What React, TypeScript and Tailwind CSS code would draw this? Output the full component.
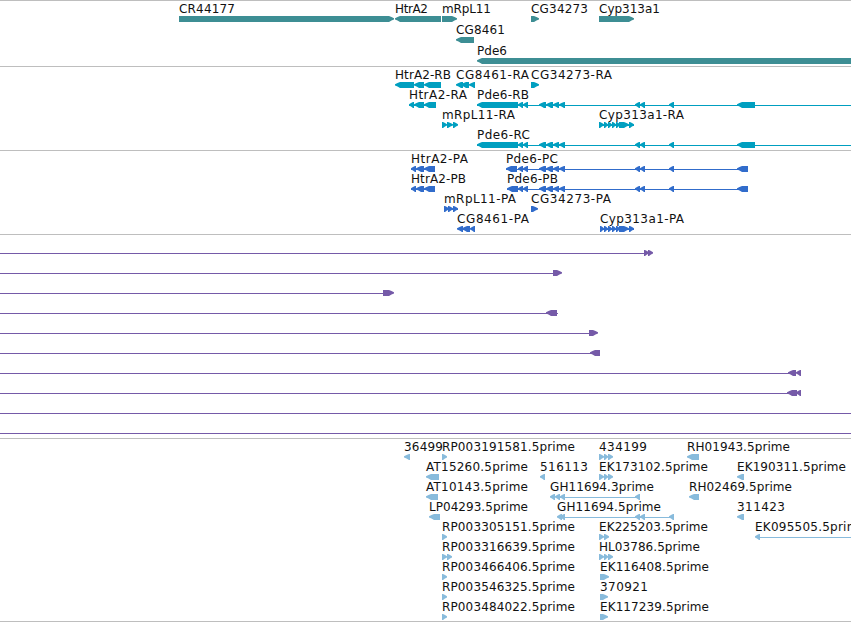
type Dir = 'l' | 'r'

type Feature = {
  row: number
  dir: Dir
  // exon blocks as [start, end]
  blocks: number[][]
  // intron line drawn behind the blocks
  line?: number[]
  // [text, start, end]
  label?: [string, number, number]
}

type TrackProps = {
  name: string
  color: string
  height: number
  pitch: number
  top: number
  features: Feature[]
}

const WIDTH = 851

const pde6Tail = [[518, 523], [523, 528], [539, 546], [546, 553], [553, 559], [559, 565], [635, 640], [640, 645], [669, 674]]
const cypExons = [[604, 608], [608, 612], [612, 616], [616, 620], [619, 629], [629, 634]]

const genes: Feature[] = [
  { row: 0, dir: 'r', blocks: [[179, 394]], label: ['CR44177', 179, 235] },
  { row: 0, dir: 'l', blocks: [[395, 441]], label: ['HtrA2', 395, 428] },
  { row: 0, dir: 'r', blocks: [[442, 457]], label: ['mRpL11', 442, 491] },
  { row: 0, dir: 'r', blocks: [[531, 539]], label: ['CG34273', 531, 588] },
  { row: 0, dir: 'r', blocks: [[599, 634]], label: ['Cyp313a1', 599, 660] },
  { row: 1, dir: 'l', blocks: [[456, 474]], label: ['CG8461', 456, 505] },
  { row: 2, dir: 'l', blocks: [[477, 860]], label: ['Pde6', 477, 507] },
]

const transcripts: Feature[] = [
  { row: 0, dir: 'l', blocks: [[395, 414], [414, 424], [424, 441]], label: ['HtrA2-RB', 395, 451] },
  { row: 0, dir: 'l', blocks: [[456, 463], [461, 469], [469, 475]], label: ['CG8461-RA', 456, 529] },
  { row: 0, dir: 'r', blocks: [[531, 539]], label: ['CG34273-RA', 531, 612] },
  { row: 1, dir: 'l', blocks: [[409, 414], [414, 424], [424, 436]], line: [409, 436], label: ['HtrA2-RA', 409, 467] },
  { row: 1, dir: 'l', blocks: [[477, 518], ...pde6Tail, [737, 755]], line: [477, 851], label: ['Pde6-RB', 477, 529] },
  { row: 2, dir: 'r', blocks: [[442, 447], [447, 453], [453, 458]], label: ['mRpL11-RA', 442, 515] },
  { row: 2, dir: 'r', blocks: [[599, 604], ...cypExons], line: [599, 634], label: ['Cyp313a1-RA', 599, 684] },
  { row: 3, dir: 'l', blocks: [[477, 518], ...pde6Tail, [737, 755]], line: [477, 851], label: ['Pde6-RC', 477, 530] },
]

const proteins: Feature[] = [
  { row: 0, dir: 'l', blocks: [[411, 416], [416, 424], [424, 435]], line: [411, 435], label: ['HtrA2-PA', 411, 468] },
  { row: 0, dir: 'l', blocks: [[506, 517], ...pde6Tail, [737, 748]], line: [506, 748], label: ['Pde6-PC', 506, 558] },
  { row: 1, dir: 'l', blocks: [[411, 416], [416, 424], [424, 435]], line: [411, 435], label: ['HtrA2-PB', 411, 466] },
  { row: 1, dir: 'l', blocks: [[507, 518], ...pde6Tail, [737, 748]], line: [507, 748], label: ['Pde6-PB', 507, 558] },
  { row: 2, dir: 'r', blocks: [[444, 449], [448, 453], [453, 458]], line: [444, 458], label: ['mRpL11-PA', 444, 516] },
  { row: 2, dir: 'r', blocks: [[531, 538]], label: ['CG34273-PA', 531, 611] },
  { row: 3, dir: 'l', blocks: [[457, 463], [462, 470], [470, 475]], label: ['CG8461-PA', 457, 529] },
  { row: 3, dir: 'r', blocks: [[600, 604], ...cypExons], line: [600, 634], label: ['Cyp313a1-PA', 600, 684] },
]

const alignments: Feature[] = [
  { row: 0, dir: 'r', blocks: [[644, 649], [648, 653]], line: [0, 648] },
  { row: 1, dir: 'r', blocks: [[553, 562]], line: [0, 554] },
  { row: 2, dir: 'r', blocks: [[383, 394]], line: [0, 384] },
  { row: 3, dir: 'l', blocks: [[546, 557]], line: [0, 558] },
  { row: 4, dir: 'r', blocks: [[589, 598]], line: [0, 590] },
  { row: 5, dir: 'l', blocks: [[590, 600]], line: [0, 598] },
  { row: 6, dir: 'l', blocks: [[788, 796], [796, 801]], line: [0, 796] },
  { row: 7, dir: 'l', blocks: [[787, 797], [796, 801]], line: [0, 796] },
  { row: 8, dir: 'l', blocks: [], line: [0, 851] },
  { row: 9, dir: 'l', blocks: [], line: [0, 851] },
]

const ests: Feature[] = [
  { row: 0, dir: 'l', blocks: [[404, 410]], label: ['36499', 404, 443] },
  { row: 0, dir: 'r', blocks: [[442, 447]], label: ['RP003191581.5prime', 442, 575] },
  { row: 0, dir: 'r', blocks: [[599, 604], [604, 608], [608, 613]], label: ['434199', 599, 647] },
  { row: 0, dir: 'l', blocks: [[687, 699]], label: ['RH01943.5prime', 687, 790] },
  { row: 1, dir: 'l', blocks: [[426, 439]], label: ['AT15260.5prime', 426, 528] },
  { row: 1, dir: 'l', blocks: [[540, 545]], label: ['516113', 540, 588] },
  { row: 1, dir: 'r', blocks: [[599, 604], [604, 608], [608, 613]], label: ['EK173102.5prime', 599, 708] },
  { row: 1, dir: 'l', blocks: [[737, 744]], label: ['EK190311.5prime', 737, 846] },
  { row: 2, dir: 'l', blocks: [[426, 438]], label: ['AT10143.5prime', 426, 528] },
  { row: 2, dir: 'l', blocks: [[550, 555], [555, 560], [560, 565], [635, 640]], line: [560, 640], label: ['GH11694.3prime', 550, 654] },
  { row: 2, dir: 'l', blocks: [[689, 699]], label: ['RH02469.5prime', 689, 792] },
  { row: 3, dir: 'l', blocks: [[429, 440]], label: ['LP04293.5prime', 429, 528] },
  { row: 3, dir: 'l', blocks: [[557, 562], [560, 565], [635, 640], [640, 645], [669, 674]], line: [560, 674], label: ['GH11694.5prime', 557, 661] },
  { row: 3, dir: 'l', blocks: [[737, 744]], label: ['311423', 737, 785] },
  { row: 4, dir: 'r', blocks: [[442, 447]], label: ['RP003305151.5prime', 442, 575] },
  { row: 4, dir: 'r', blocks: [[599, 604], [604, 609]], label: ['EK225203.5prime', 599, 708] },
  { row: 4, dir: 'l', blocks: [[755, 760]], line: [757, 851], label: ['EK095505.5prime', 755, 866] },
  { row: 5, dir: 'r', blocks: [[442, 447], [447, 452]], label: ['RP003316639.5prime', 442, 575] },
  { row: 5, dir: 'r', blocks: [[599, 604], [604, 608], [608, 613]], label: ['HL03786.5prime', 599, 700] },
  { row: 6, dir: 'r', blocks: [[442, 447]], label: ['RP003466406.5prime', 442, 575] },
  { row: 6, dir: 'r', blocks: [[600, 609]], label: ['EK116408.5prime', 600, 709] },
  { row: 7, dir: 'r', blocks: [[442, 447]], label: ['RP003546325.5prime', 442, 575] },
  { row: 7, dir: 'r', blocks: [[600, 608]], label: ['370921', 600, 648] },
  { row: 8, dir: 'r', blocks: [[442, 447]], label: ['RP003484022.5prime', 442, 575] },
  { row: 8, dir: 'r', blocks: [[600, 608]], label: ['EK117239.5prime', 600, 709] },
]

// block with a blunt arrow head on the strand side
const blockPoints = (a: number, b: number, y: number, dir: Dir) => {
  const head = Math.min(5, b - a - 1)
  const tip = dir === 'l' ? a : b
  const back = dir === 'l' ? b : a
  const s = dir === 'l' ? 1 : -1
  const mid = tip + s * head * 0.5
  const neck = tip + s * head
  return [
    [tip, y + 2.2],
    [mid, y + 1],
    [neck, y],
    [back, y],
    [back, y + 6],
    [neck, y + 6],
    [mid, y + 4.6],
    [tip, y + 3.4],
  ].join(' ')
}

const Track = ({ name, color, height, pitch, top, features }: TrackProps) => (
  <section aria-label={name} className="border-t border-[#bebebe]">
    <svg width={WIDTH} height={height} className="block overflow-hidden">
      {features.map((f, i) => {
        const y = top + f.row * pitch
        return (
          <g key={i}>
            {f.line && <rect x={f.line[0]} y={y + 3} width={f.line[1] - f.line[0]} height={1} fill={color} />}
            {f.blocks.map(([a, b]) => (
              <polygon key={a} points={blockPoints(a, b, y, f.dir)} fill={color} />
            ))}
            {f.label && (
              <text
                x={f.label[1]}
                y={y - 3}
                textLength={f.label[2] - f.label[1]}
                className="fill-[#111] font-['DejaVu_Sans',sans-serif] text-[12px]"
              >
                {f.label[0]}
              </text>
            )}
          </g>
        )
      })}
    </svg>
  </section>
)

export default function App() {
  return (
    <main className="flex h-[622px] w-[851px] flex-col overflow-hidden border-b border-[#bebebe] bg-white">
      <Track name="Genes" color="#3d8e94" height={65} pitch={21} top={15} features={genes} />
      <Track name="Transcripts" color="#009fc0" height={83} pitch={20} top={15} features={transcripts} />
      <Track name="Proteins" color="#316ccb" height={83} pitch={20} top={15} features={proteins} />
      <Track name="Alignments" color="#755aa8" height={203} pitch={20} top={15} features={alignments} />
      <Track name="ESTs" color="#88bbdc" height={182} pitch={20} top={15} features={ests} />
    </main>
  )
}
